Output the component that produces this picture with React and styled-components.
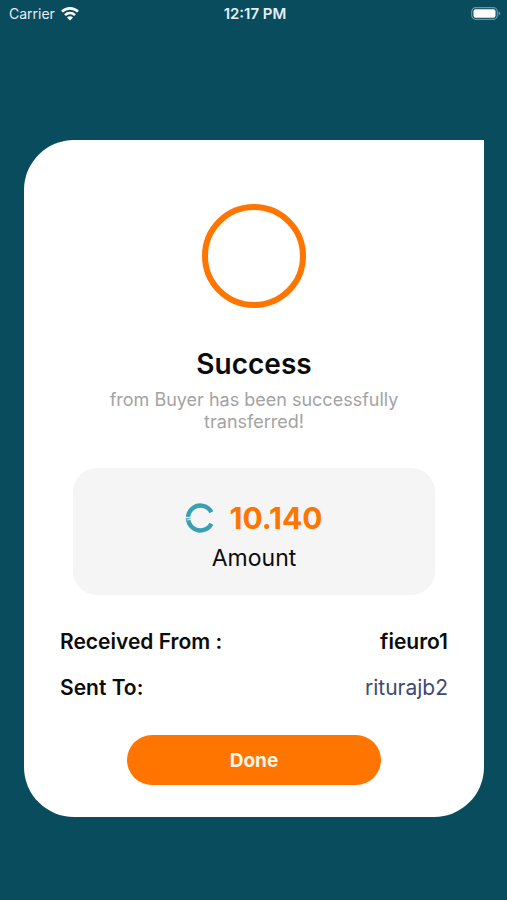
import React from "react";
import styled, { createGlobalStyle } from "styled-components";

const GlobalStyle = createGlobalStyle`
  * { box-sizing: border-box; }
  body {
    margin: 0;
    background: #084c5e;
    font-family: Inter, "Liberation Sans", sans-serif;
    color: #0c0c0c;
  }
`;

const Screen = styled.div`
  min-height: 100vh;
  display: flex;
  flex-direction: column;
  background: #084c5e;
`;

const StatusBar = styled.header`
  display: grid;
  grid-template-columns: 1fr auto 1fr;
  align-items: center;
  height: 28px;
  padding: 0 6px 0 9px;
  color: #e4eff2;
  font-size: 14px;
  line-height: 20px;
`;

const Carrier = styled.div`
  display: flex;
  align-items: center;
  gap: 6px;
`;

const Clock = styled.time`
  font-size: 15px;
  font-weight: 600;
`;

const BatteryIcon = styled.svg`
  justify-self: end;
`;

const Card = styled.main`
  display: flex;
  flex-direction: column;
  align-items: center;
  margin: 112px 23px 83px 24px;
  padding: 64px 36px 32px;
  background: #fff;
  border-radius: 50px 0 50px 50px;
`;

const Ring = styled.div`
  width: 104px;
  height: 104px;
  border: 6px solid #ff7500;
  border-radius: 50%;
`;

const Title = styled.h1`
  margin: 37px 0 0;
  font-size: 28px;
  line-height: 38px;
  font-weight: 600;
`;

const Message = styled.p`
  max-width: 320px;
  margin: 6px 0 0;
  text-align: center;
  font-size: 18px;
  line-height: 22px;
  color: #a3a3a3;
`;

const AmountPanel = styled.section`
  display: flex;
  flex-direction: column;
  align-items: center;
  gap: 6px;
  align-self: stretch;
  margin: 35px 13px 0;
  padding: 32px 16px 21px;
  background: #f5f5f5;
  border-radius: 24px;
`;

const AmountRow = styled.div`
  display: flex;
  align-items: center;
  gap: 14px;
`;

const AmountValue = styled.strong`
  font-size: 30px;
  line-height: 36px;
  font-weight: 700;
  color: #ff7500;
`;

const AmountLabel = styled.span`
  font-size: 23px;
  line-height: 32px;
`;

const Details = styled.dl`
  display: flex;
  flex-direction: column;
  gap: 16px;
  align-self: stretch;
  margin: 32px 0 0;
`;

const DetailRow = styled.div`
  display: flex;
  justify-content: space-between;
  font-size: 21px;
  line-height: 30px;
`;

const DetailLabel = styled.dt`
  font-weight: 600;
`;

const DetailValue = styled.dd`
  margin: 0;
  font-weight: ${(p) => (p.$muted ? 400 : 600)};
  color: ${(p) => (p.$muted ? "#3c4a70" : "inherit")};
`;

const DoneButton = styled.button`
  width: 254px;
  max-width: 100%;
  height: 50px;
  margin-top: 32px;
  padding: 2px 16px 0;
  border: 0;
  border-radius: 25px;
  background: #ff7500;
  color: #fff6ea;
  font-family: inherit;
  font-size: 19px;
  line-height: 24px;
  font-weight: 700;
  cursor: pointer;
`;

function Wifi() {
  return (
    <svg width="18" height="14" viewBox="0 0 18 14" fill="none" stroke="#fff" strokeWidth="2.6" aria-hidden="true">
      <path d="M1 4.7 C5.5 .2 12.5 .2 17 4.7" />
      <path d="M4 8.1 C6.8 5.3 11.2 5.3 14 8.1" />
      <path d="M9 13.4 L6 10.5 C7.7 8.9 10.3 8.9 12 10.5 Z" fill="#fff" stroke="none" />
    </svg>
  );
}

function Battery() {
  return (
    <BatteryIcon width="30" height="14" viewBox="0 0 30 14" aria-hidden="true">
      <rect x=".7" y=".7" width="25.6" height="11.6" rx="4" fill="none" stroke="#6b97a3" strokeWidth="1.2" />
      <rect x="2.5" y="2.2" width="22" height="8.6" rx="2" fill="#fff" />
      <path d="M27.6 4.3 Q31 6.5 27.6 8.7 Z" fill="#6b97a3" />
    </BatteryIcon>
  );
}

function Coin() {
  return (
    <svg width="30" height="30" viewBox="0 0 30 30" fill="none" aria-hidden="true">
      <path d="M26.4 9.2 A12.4 12.4 0 1 0 26.4 20.8" stroke="#3a9eb4" strokeWidth="4.4" />
      <path d="M0 14.4 H5 M2 17 L6 16.2" stroke="#f5f5f5" strokeWidth="1" />
      <path d="M.8 15.8 H5" stroke="#82c1ce" strokeWidth="1" />
    </svg>
  );
}

export default function App() {
  return (
    <Screen>
      <GlobalStyle />
      <StatusBar>
        <Carrier>
          Carrier
          <Wifi />
        </Carrier>
        <Clock>12:17 PM</Clock>
        <Battery />
      </StatusBar>
      <Card>
        <Ring />
        <Title>Success</Title>
        <Message>from Buyer has been successfully transferred!</Message>
        <AmountPanel>
          <AmountRow>
            <Coin />
            <AmountValue>10.140</AmountValue>
          </AmountRow>
          <AmountLabel>Amount</AmountLabel>
        </AmountPanel>
        <Details>
          <DetailRow>
            <DetailLabel>Received From :</DetailLabel>
            <DetailValue>fieuro1</DetailValue>
          </DetailRow>
          <DetailRow>
            <DetailLabel>Sent To:</DetailLabel>
            <DetailValue $muted>riturajb2</DetailValue>
          </DetailRow>
        </Details>
        <DoneButton type="button">Done</DoneButton>
      </Card>
    </Screen>
  );
}
